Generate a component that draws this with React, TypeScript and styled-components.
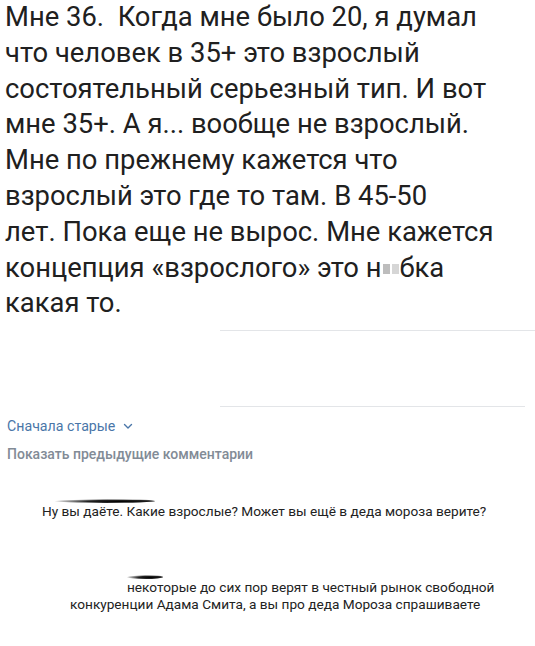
import styled, { createGlobalStyle } from 'styled-components';

const GlobalStyle = createGlobalStyle`
    html, body {
        margin: 0;
        padding: 0;
        background: #ffffff;
    }
    body {
        width: 535px;
        height: 646px;
        overflow: hidden;
    }
`;

const Page = styled.div`
    width: 535px;
    height: 646px;
    background: #fff;
    display: flex;
    flex-direction: column;
    font-family: Roboto, "Noto Sans", sans-serif;
`;

const Post = styled.div`
    padding: 0 0 0 5px;
    font-size: 27.4px;
    line-height: 35.8px;
    color: #202020;
`;

const PostLine = styled.div`
    white-space: pre;
`;

const Censor = styled.span`
    display: inline-flex;
    gap: 2px;
    vertical-align: middle;
    margin: 0 1px;
    span {
        display: block;
        width: 7px;
        height: 10px;
        background: #bdbdbd;
    }
    span:nth-child(2) {
        background: #d6d6d6;
    }
`;

const Divider = styled.div<{ right: number }>`
    height: 1px;
    background: #e3e5e8;
    margin-left: 220px;
    margin-right: ${p => p.right}px;
`;

const Spacer = styled.div<{ h: number }>`
    height: ${p => p.h}px;
`;

const SortButton = styled.div`
    display: flex;
    align-items: center;
    gap: 8px;
    padding-left: 7px;
    font-size: 14.2px;
    color: #4a76a8;
    svg {
        margin-top: 1px;
    }
`;

const ShowPrev = styled.div`
    padding-left: 7px;
    font-size: 14px;
    font-weight: 500;
    color: #828b96;
`;

const Comment = styled.div<{ left: number }>`
    position: relative;
    padding-left: ${p => p.left}px;
    font-size: 13.65px;
    line-height: 17px;
    color: #222;
    white-space: nowrap;
`;

const Smear = styled.div<{ x: number; w: number }>`
    position: absolute;
    left: ${p => p.x}px;
    top: -4px;
    width: ${p => p.w}px;
    height: 4px;
    border-radius: 50%;
    background: radial-gradient(ellipse at 65% 60%, #000 0%, #222 35%, rgba(0,0,0,0) 75%);
`;

const postLines = [
    'Мне 36.  Когда мне было 20, я думал',
    'что человек в 35+ это взрослый',
    'состоятельный серьезный тип. И вот',
    'мне 35+. А я... вообще не взрослый.',
    'Мне по прежнему кажется что',
    'взрослый это где то там. В 45-50',
    'лет. Пока еще не вырос. Мне кажется',
];

export default function App() {
    return <>
        <GlobalStyle />
        <Page>
            <Post>
                {postLines.map(l => <PostLine key={l}>{l}</PostLine>)}
                <PostLine>
                    концепция «взрослого» это н<Censor><span /><span /></Censor>бка
                </PostLine>
                <PostLine>какая то.</PostLine>
            </Post>
            <Spacer h={8} />
            <Divider right={0} />
            <Spacer h={75} />
            <Divider right={10} />
            <Spacer h={11} />
            <SortButton>
                Сначала старые
                <svg width="10" height="7" viewBox="0 0 10 7">
                    <path d="M1.5 1.5 L5 5 L8.5 1.5" fill="none" stroke="#4a76a8" strokeWidth="1.4" strokeLinecap="round" strokeLinejoin="round" />
                </svg>
            </SortButton>
            <Spacer h={12} />
            <ShowPrev>Показать предыдущие комментарии</ShowPrev>
            <Spacer h={41} />
            <Comment left={42}>
                <Smear x={55} w={100} />
                Ну вы даёте. Какие взрослые? Может вы ещё в деда мороза верите?
            </Comment>
            <Spacer h={59} />
            <Comment left={127}>
                <Smear x={127} w={36} />
                некоторые до сих пор верят в честный рынок свободной
            </Comment>
            <Comment left={70}>
                конкуренции Адама Смита, а вы про деда Мороза спрашиваете
            </Comment>
        </Page>
    </>;
}
